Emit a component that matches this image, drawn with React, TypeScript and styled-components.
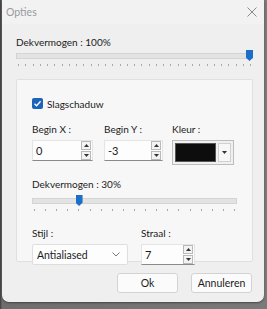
import React from 'react';
import styled, { createGlobalStyle } from 'styled-components';

const GlobalStyle = createGlobalStyle`
  html, body {
    margin: 0;
    padding: 0;
    background: #5b5b5b;
  }
  body {
    font-family: Lato, 'Liberation Sans', sans-serif;
    font-size: 10px;
    color: #1b1b1b;
  }
`;

const Page = styled.div`
  width: 267px;
  height: 309px;
  display: flex;
  padding-left: 2px;
  box-sizing: border-box;
  background: linear-gradient(90deg, #3a3a3a 0, #6e6e6e 2px, #7a7a7a 100%);
`;

const Window = styled.div`
  width: 262px;
  height: 302px;
  background: #efefef;
  border-radius: 0 0 7px 7px;
  display: flex;
  flex-direction: column;
  box-shadow: 0 1px 2px rgba(0, 0, 0, 0.4);
`;

const TitleBar = styled.div`
  height: 24px;
  display: flex;
  align-items: center;
  justify-content: space-between;
  padding: 0 7px 0 4px;
  background: #f2f2f2;
`;

const Title = styled.span`
  color: #9a9a9a;
  font-size: 10.5px;
`;

const Body = styled.div`
  flex: 1;
  display: flex;
  flex-direction: column;
  padding: 11px 11px 0 14px;
`;

const Label = styled.div`
  height: 15px;
  line-height: 15px;
  white-space: nowrap;
`;

const SliderWrap = styled.div<{ $width: number }>`
  width: ${({ $width }) => $width}px;
  display: flex;
  flex-direction: column;
`;

const SliderRail = styled.div`
  position: relative;
  height: 11px;
  display: flex;
  align-items: center;
`;

const Track = styled.div`
  flex: 1;
  height: 4px;
  background: #e3e3e3;
  border: 1px solid #d4d4d4;
`;

const Thumb = styled.div`
  position: absolute;
  top: 0;
  width: 7px;
  height: 11px;
  margin-left: -3px;
  background: #1c6fc9;
  clip-path: polygon(0 0, 100% 0, 100% 70%, 50% 100%, 0 70%);
`;

const Ticks = styled.div`
  display: flex;
  justify-content: space-between;
  padding: 0 2px;
  margin-top: 3px;
  height: 2px;
`;

const Tick = styled.span`
  width: 1px;
  height: 2px;
  background: #a9a9a9;
`;

const Slider = ({ value, width, ticks }: { value: number; width: number; ticks: number }) => (
  <SliderWrap $width={width}>
    <SliderRail>
      <Track />
      <Thumb style={{ left: `${3 + (value / 100) * (width - 7)}px` }} />
    </SliderRail>
    <Ticks>
      {Array.from({ length: ticks }).map((_, i) => (
        <Tick key={i} />
      ))}
    </Ticks>
  </SliderWrap>
);

const Group = styled.div`
  margin-top: 13px;
  width: 237px;
  height: 183px;
  box-sizing: border-box;
  background: #f7f7f7;
  border: 1px solid #e0e0e0;
  border-radius: 2px;
  display: flex;
  flex-direction: column;
  padding: 18px 0 0 15px;
`;

const CheckRow = styled.label`
  display: flex;
  align-items: center;
  gap: 4px;
  height: 11px;
`;

const CheckBox = styled.span`
  width: 11px;
  height: 11px;
  border-radius: 2px;
  background: #1d64b8;
  display: flex;
  align-items: center;
  justify-content: center;
`;

const Row = styled.div<{ $top: number }>`
  display: flex;
  margin-top: ${({ $top }) => $top}px;
`;

const Field = styled.div<{ $width: number; $right: number }>`
  width: ${({ $width }) => $width}px;
  margin-right: ${({ $right }) => $right}px;
  display: flex;
  flex-direction: column;
  gap: 3px;
`;

const SpinBox = styled.div`
  height: 19px;
  display: flex;
  align-items: center;
  background: #fdfdfd;
  border: 1px solid #e4e4e4;
  border-bottom: 1px solid #8a8a8a;
  padding-left: 3px;
  padding-right: 1px;
  font-size: 11px;
`;

const SpinText = styled.span`
  flex: 1;
`;

const SpinButtons = styled.div`
  display: flex;
  flex-direction: column;
  gap: 1px;
`;

const SpinButton = styled.span`
  width: 8px;
  height: 7px;
  border: 1px solid #b9b9b9;
  background: #f3f3f3;
  display: flex;
  align-items: center;
  justify-content: center;
`;

const Arrow = ({ up }: { up?: boolean }) => (
  <svg width="5" height="3" viewBox="0 0 5 3">
    <path d={up ? 'M0 3 L2.5 0 L5 3 Z' : 'M0 0 L2.5 3 L5 0 Z'} fill="#333" />
  </svg>
);

const Spin = ({ value }: { value: string }) => (
  <SpinBox>
    <SpinText>{value}</SpinText>
    <SpinButtons>
      <SpinButton>
        <Arrow up />
      </SpinButton>
      <SpinButton>
        <Arrow />
      </SpinButton>
    </SpinButtons>
  </SpinBox>
);

const ColorCombo = styled.div`
  height: 19px;
  display: flex;
  align-items: stretch;
  border: 1px solid #bdbdbd;
  background: #f0f0f0;
  padding: 2px;
  gap: 2px;
`;

const Swatch = styled.div`
  flex: 1;
  background: #0d0d0d;
  border: 1px solid #555;
`;

const DropButton = styled.div`
  width: 11px;
  display: flex;
  align-items: center;
  justify-content: center;
  background: #f7f7f7;
  border: 1px solid #d0d0d0;
`;

const Select = styled.div`
  height: 19px;
  display: flex;
  align-items: center;
  justify-content: space-between;
  padding: 0 7px 0 4px;
  background: #fdfdfd;
  border: 1px solid #dedede;
  border-radius: 2px;
  font-size: 10.5px;
`;

const Buttons = styled.div`
  display: flex;
  justify-content: flex-end;
  gap: 13px;
  margin-top: 11px;
  padding-right: 1px;
`;

const Button = styled.button`
  width: 61px;
  height: 20px;
  font-family: inherit;
  font-size: 10.5px;
  color: #1b1b1b;
  background: #fbfbfb;
  border: 1px solid #d3d3d3;
  border-radius: 3px;
  padding: 0;
`;

export default function App() {
  return (
    <>
      <GlobalStyle />
      <Page>
        <Window>
          <TitleBar>
            <Title>Opties</Title>
            <svg width="10" height="10" viewBox="0 0 10 10">
              <path d="M0.5 0.5 L9.5 9.5 M9.5 0.5 L0.5 9.5" stroke="#8a8a8a" strokeWidth="1" />
            </svg>
          </TitleBar>
          <Body>
            <Label>Dekvermogen : 100%</Label>
            <Slider value={100} width={237} ticks={33} />
            <Group>
              <CheckRow>
                <CheckBox>
                  <svg width="9" height="9" viewBox="0 0 9 9">
                    <path d="M1.5 4.8 L3.6 6.8 L7.6 2.2" stroke="#fff" strokeWidth="1.3" fill="none" />
                  </svg>
                </CheckBox>
                Slagschaduw
              </CheckRow>
              <Row $top={13}>
                <Field $width={61} $right={11}>
                  <Label>Begin X :</Label>
                  <Spin value="0" />
                </Field>
                <Field $width={59} $right={9}>
                  <Label>Begin Y :</Label>
                  <Spin value="-3" />
                </Field>
                <Field $width={62} $right={0}>
                  <Label>Kleur :</Label>
                  <ColorCombo>
                    <Swatch />
                    <DropButton>
                      <svg width="5" height="3" viewBox="0 0 5 3">
                        <path d="M0 0 L2.5 3 L5 0 Z" fill="#333" />
                      </svg>
                    </DropButton>
                  </ColorCombo>
                </Field>
              </Row>
              <Row $top={12}>
                <Field $width={205} $right={0}>
                  <Label>Dekvermogen : 30%</Label>
                  <Slider value={22} width={205} ticks={19} />
                </Field>
              </Row>
              <Row $top={15}>
                <Field $width={96} $right={13}>
                  <Label>Stijl :</Label>
                  <Select>
                    <span>Antialiased</span>
                    <svg width="8" height="5" viewBox="0 0 8 5">
                      <path d="M0.5 0.5 L4 4 L7.5 0.5" stroke="#777" fill="none" />
                    </svg>
                  </Select>
                </Field>
                <Field $width={54} $right={0}>
                  <Label>Straal :</Label>
                  <Spin value="7" />
                </Field>
              </Row>
            </Group>
            <Buttons>
              <Button>Ok</Button>
              <Button>Annuleren</Button>
            </Buttons>
          </Body>
        </Window>
      </Page>
    </>
  );
}
